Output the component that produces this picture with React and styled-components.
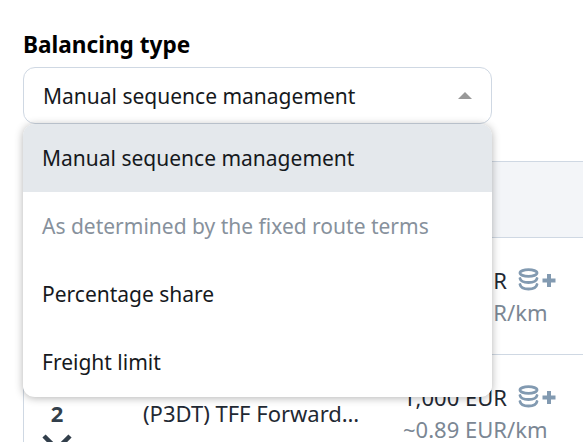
import React from 'react'
import styled, { createGlobalStyle } from 'styled-components'

const GlobalStyle = createGlobalStyle`
  html, body {
    margin: 0;
    padding: 0;
    height: 100%;
    overflow: hidden;
    background: #fff;
  }
  * { box-sizing: border-box; }
`

const Page = styled.div`
  width: 583px;
  height: 442px;
  overflow: hidden;
  padding: 31px 0 0 23px;
  font-family: "Noto Sans", "Open Sans", sans-serif;
  color: #1f2933;
`

const Label = styled.div`
  font-size: 22.6px;
  font-weight: 700;
  line-height: 27px;
  color: #000;
  margin-bottom: 9px;
`

const SelectWrap = styled.div`
  position: relative;
  width: 469px;
`

const SelectBox = styled.div`
  height: 57px;
  border: 1px solid #cfd8e3;
  border-radius: 12px;
  padding: 0 19px;
  display: flex;
  align-items: center;
  justify-content: space-between;
  font-size: 21px;
  color: #16191d;
`

const Caret = styled.span`
  width: 0;
  height: 0;
  border-left: 7px solid transparent;
  border-right: 7px solid transparent;
  border-bottom: 7px solid #999;
`

const Menu = styled.div`
  position: absolute;
  top: 57px;
  left: 0;
  right: 0;
  z-index: 2;
  padding-bottom: 1px;
  background: #fff;
  border-radius: 12px;
  overflow: hidden;
  box-shadow: 0 1px 8px rgba(0, 0, 0, 0.3);
`

const Option = styled.div`
  height: 68px;
  display: flex;
  align-items: center;
  padding-left: 19px;
  font-size: 21px;
  color: ${props => (props.disabled ? '#87919c' : '#16191d')};
  background: ${props => (props.active ? '#e4e8ec' : '#fff')};
`

const Table = styled.div`
  margin-top: 37px;
  width: 560px;
  border-left: 1px solid #cfd8e3;
`

const TableHead = styled.div`
  height: 77px;
  background: #f3f5f8;
  border-top: 1px solid #cfd8e3;
  border-bottom: 1px solid #cfd8e3;
`

const Row = styled.div`
  height: 117px;
  border-bottom: 1px solid #cfd8e3;
  display: grid;
  grid-template-columns: 66px 313px 1fr;
  align-items: start;
  padding-top: 26px;
`

const Index = styled.div`
  display: flex;
  flex-direction: column;
  align-items: center;
  padding-top: 18px;
  font-size: 22px;
  font-weight: 700;
  color: #323f4b;
  line-height: 29px;
  svg { margin-top: 6px; }
`

const RouteName = styled.div`
  font-size: 22px;
  line-height: 29px;
  padding: 18px 0 0 53px;
  white-space: nowrap;
`

const Price = styled.div`
  white-space: nowrap;
  font-size: 22px;
  line-height: 32px;
`

const PriceLine = styled.div`
  display: flex;
  align-items: center;
  gap: 11px;
`

const PerKm = styled.div`
  color: #7b8794;
`

const CoinsPlus = () => (
  <svg width="39" height="24" viewBox="0 0 39 24" fill="none">
    <g stroke="#829ab1" strokeWidth="2.8" strokeLinecap="round">
      <ellipse cx="10.500" cy="5" rx="8.500" ry="3.400" />
      <path d="M2 10.500c.6 2.600 4 4 8.500 4s7.900-1.400 8.500-4" />
      <path d="M2 16.500c.6 2.800 4 4.500 8.500 4.500s7.900-1.700 8.500-4.500" />
    </g>
    <path d="M31 6v13M24.500 12.500h13" stroke="#829ab1" strokeWidth="4" />
  </svg>
)

const CloseMark = () => (
  <svg width="30" height="18" viewBox="0 0 30 18">
    <path d="M2 2l26 26M28 2L2 28" stroke="#323f4b" strokeWidth="4.500" fill="none" />
  </svg>
)

const RouteRow = ({ index }) => (
  <Row>
    <Index>
      {index}
      <CloseMark />
    </Index>
    <RouteName>(P3DT) TFF Forward…</RouteName>
    <Price>
      <PriceLine>
        1,000 EUR
        <CoinsPlus />
      </PriceLine>
      <PerKm>~0.89 EUR/km</PerKm>
    </Price>
  </Row>
)

const options = [
  { label: 'Manual sequence management', active: true },
  { label: 'As determined by the fixed route terms', disabled: true },
  { label: 'Percentage share' },
  { label: 'Freight limit' }
]

const App = () => (
  <Page>
    <GlobalStyle />
    <Label>Balancing type</Label>
    <SelectWrap>
      <SelectBox>
        Manual sequence management
        <Caret />
      </SelectBox>
      <Menu>
        {options.map(o => (
          <Option key={o.label} active={o.active} disabled={o.disabled}>
            {o.label}
          </Option>
        ))}
      </Menu>
    </SelectWrap>
    <Table>
      <TableHead />
      <RouteRow index={1} />
      <RouteRow index={2} />
    </Table>
  </Page>
)

export default App
